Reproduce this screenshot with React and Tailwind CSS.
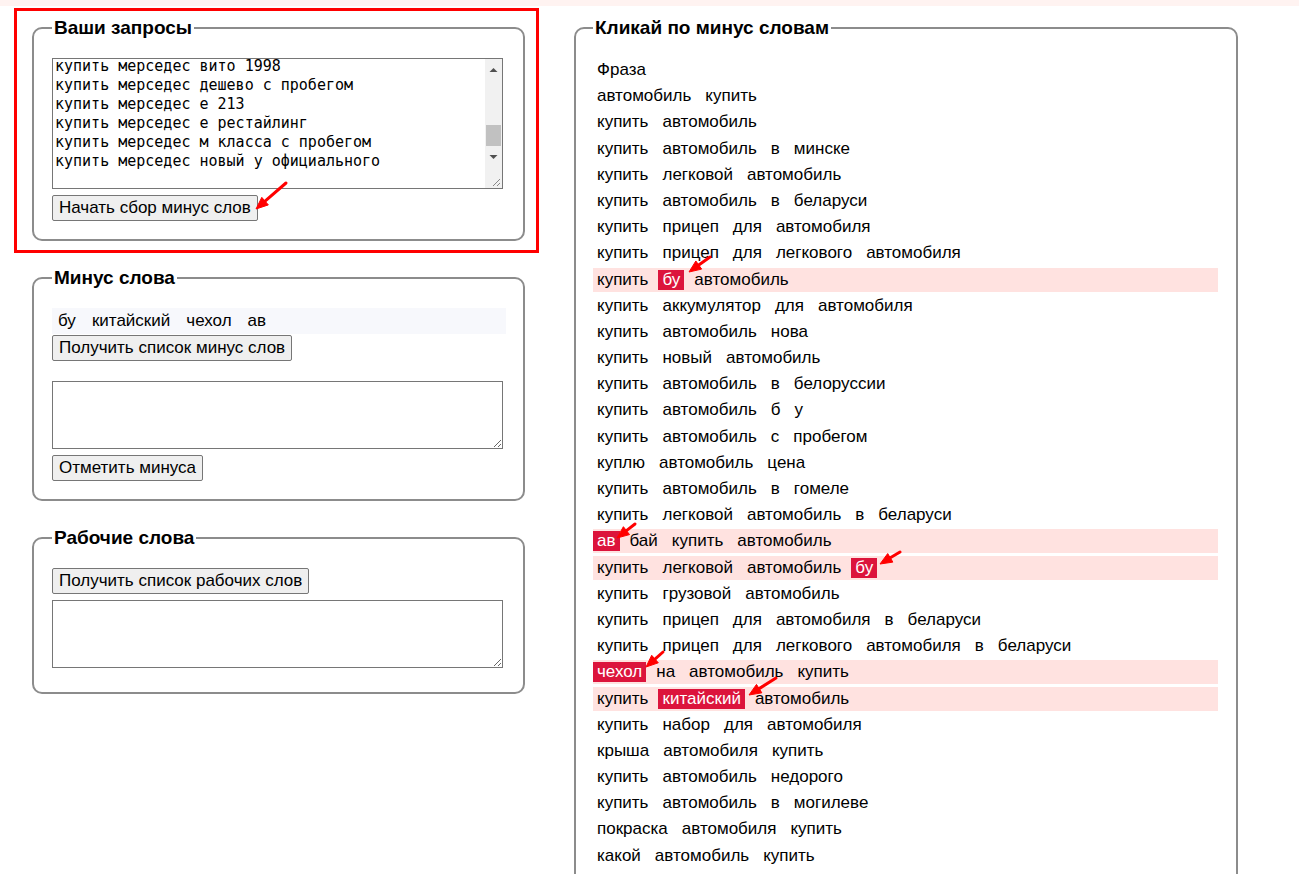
import { useEffect, useRef } from 'react'

const QUERIES = [
  'купить мерседес',
  'купить мерседес 124',
  'купить мерседес 140',
  'купить мерседес 190',
  'купить мерседес 210',
  'купить мерседес а класс',
  'купить мерседес актрос',
  'купить мерседес б класс',
  'купить мерседес бенц',
  'купить мерседес бенц бу',
  'купить мерседес бу',
  'купить мерседес в беларуси',
  'купить мерседес в минске',
  'купить мерседес вито',
  'купить мерседес вито бу',
  'купить мерседес вито 1998',
  'купить мерседес дешево с пробегом',
  'купить мерседес е 213',
  'купить мерседес е рестайлинг',
  'купить мерседес м класса с пробегом',
  'купить мерседес новый у официального',
  '',
]

// rows of the right panel; words in [] are marked as minus words
const PHRASES = [
  'Фраза',
  'автомобиль купить',
  'купить автомобиль',
  'купить автомобиль в минске',
  'купить легковой автомобиль',
  'купить автомобиль в беларуси',
  'купить прицеп для автомобиля',
  'купить прицеп для легкового автомобиля',
  'купить [бу] автомобиль',
  'купить аккумулятор для автомобиля',
  'купить автомобиль нова',
  'купить новый автомобиль',
  'купить автомобиль в белоруссии',
  'купить автомобиль б у',
  'купить автомобиль с пробегом',
  'куплю автомобиль цена',
  'купить автомобиль в гомеле',
  'купить легковой автомобиль в беларуси',
  '[ав] бай купить автомобиль',
  'купить легковой автомобиль [бу]',
  'купить грузовой автомобиль',
  'купить прицеп для автомобиля в беларуси',
  'купить прицеп для легкового автомобиля в беларуси',
  '[чехол] на автомобиль купить',
  'купить [китайский] автомобиль',
  'купить набор для автомобиля',
  'крыша автомобиля купить',
  'купить автомобиль недорого',
  'купить автомобиль в могилеве',
  'покраска автомобиля купить',
  'какой автомобиль купить',
]

const ARROWS = [
  [286, 183, 256, 209],
  [710, 257, 689, 272],
  [635, 524, 617, 538],
  [900, 552, 880, 564],
  [663, 652, 646, 667],
  [776, 678, 749, 695],
]

const btn = 'block rounded-[2px] border border-[#767676] bg-[#efefef] px-[6px] py-[2px] text-[17px] leading-[20px] text-black'
const area = 'block w-[451px] resize-y border border-[#767676] bg-white'

function Box({ title, className = '', children }) {
  return (
    <fieldset className={`rounded-[10px] border-2 border-[#8c8c8c] pt-[20px] pb-[18px] ${className}`}>
      <legend className="px-[2px] text-[19px] font-bold leading-[21px] text-black">{title}</legend>
      {children}
    </fieldset>
  )
}

function Arrows() {
  return (
    <svg className="pointer-events-none absolute left-0 top-0" width="1299" height="874">
      {ARROWS.map(([x1, y1, x2, y2], i) => {
        const len = Math.hypot(x2 - x1, y2 - y1)
        const dx = (x2 - x1) / len
        const dy = (y2 - y1) / len
        const bx = x2 - dx * 12
        const by = y2 - dy * 12
        const pts = `${x2},${y2} ${bx - dy * 5},${by + dx * 5} ${bx + dy * 5},${by - dx * 5}`
        return (
          <g key={i} fill="#ff0000" stroke="#ff0000">
            <line x1={x1} y1={y1} x2={bx} y2={by} strokeWidth="3" strokeLinecap="round" />
            <polygon points={pts} strokeWidth="1" strokeLinejoin="round" />
          </g>
        )
      })}
    </svg>
  )
}

// classic scrollbar drawn over the textarea (native one is hidden)
function FakeScrollbar() {
  return (
    <div className="pointer-events-none absolute right-[1px] top-[1px] h-[129px] w-[17px] bg-[#f1f1f1]">
      <svg width="17" height="129">
        <polygon points="4.5,13 12.5,13 8.5,9" fill="#505050" />
        <rect x="1" y="66" width="15" height="21" fill="#c1c1c1" />
        <polygon points="4.5,96 12.5,96 8.5,100" fill="#505050" />
        <line x1="15" y1="120" x2="8" y2="127" stroke="#888" strokeWidth="1" />
        <line x1="15" y1="124" x2="12" y2="127" stroke="#888" strokeWidth="1" />
      </svg>
    </div>
  )
}

function Row({ text }) {
  const words = text.split(' ')
  const marked = words.some((w) => w.startsWith('['))
  return (
    <div className={`flex h-[24px] items-center whitespace-pre ${marked ? 'bg-[#ffe2e0]' : ''}`}>
      {words.map((w, i) => {
        const hit = w.startsWith('[')
        return (
          <span key={i} className="flex items-center">
            <span className={`px-[4px] leading-[20px] ${hit ? 'bg-[#dc143c] text-white' : ''}`}>{w.replace(/[[\]]/g, '')}</span>
            {i < words.length - 1 && <span className="w-[6px]" />}
          </span>
        )
      })}
    </div>
  )
}

export default function App() {
  const ref = useRef(null)
  useEffect(() => {
    const el = ref.current
    if (el) el.scrollTop = el.scrollHeight - el.clientHeight - 2
  }, [])

  return (
    <div className="relative min-h-[874px] w-full overflow-hidden bg-white text-[17px] text-black" style={{ fontFamily: '"Liberation Sans", Arial, sans-serif' }}>
      <div className="h-[6px] bg-[#fff3f1]" />
      <div className="flex items-start">
        {/* left column */}
        <div className="ml-[14px] mt-[2px] w-[525px]">
          <div className="border-[3px] border-[#ff0000] pb-[9px] pl-[15px] pr-[11px] pt-[6px]">
            <Box title="Ваши запросы" className="pl-[18px] pr-[17px]">
              <div className="relative w-[451px]">
                <textarea
                  ref={ref}
                  readOnly
                  defaultValue={QUERIES.join('\n')}
                  className={`${area} h-[131px] overflow-y-scroll pb-0 pl-[2px] pr-[20px] pt-[1px] text-[15px] leading-[19px] [scrollbar-width:none]`}
                  style={{ fontFamily: '"DejaVu Sans Mono", monospace' }}
                />
                <FakeScrollbar />
              </div>
              <button className={`${btn} mt-[6px]`}>Начать сбор минус слов</button>
            </Box>
          </div>

          <div className="ml-[18px] mt-[14px] w-[493px]">
            <Box title="Минус слова" className="pl-[18px] pr-[17px]">
              <div className="flex h-[26px] items-center bg-[#f7f8fc] pl-[1px]">
                {['бу', 'китайский', 'чехол', 'ав'].map((w) => (
                  <span key={w} className="mr-[6px] px-[5px]">{w}</span>
                ))}
              </div>
              <button className={`${btn} mt-[1px]`}>Получить список минус слов</button>
              <textarea className={`${area} mt-[20px] h-[68px]`} />
              <button className={`${btn} mt-[6px]`}>Отметить минуса</button>
            </Box>
          </div>

          <div className="ml-[18px] mt-[26px] w-[493px]">
            <Box title="Рабочие слова" className="pl-[18px] pr-[17px]">
              <button className={btn}>Получить список рабочих слов</button>
              <textarea className={`${area} mb-[6px] mt-[6px] h-[68px]`} />
            </Box>
          </div>
        </div>

        {/* right column */}
        <div className="ml-[35px] mt-[11px] w-[664px]">
          <Box title="Кликай по минус словам" className="pl-[17px] pr-[18px]">
            <div className="flex flex-col gap-[2.2px]">
              {PHRASES.map((p, i) => (
                <Row key={i} text={p} />
              ))}
            </div>
          </Box>
        </div>
      </div>
      <Arrows />
    </div>
  )
}
